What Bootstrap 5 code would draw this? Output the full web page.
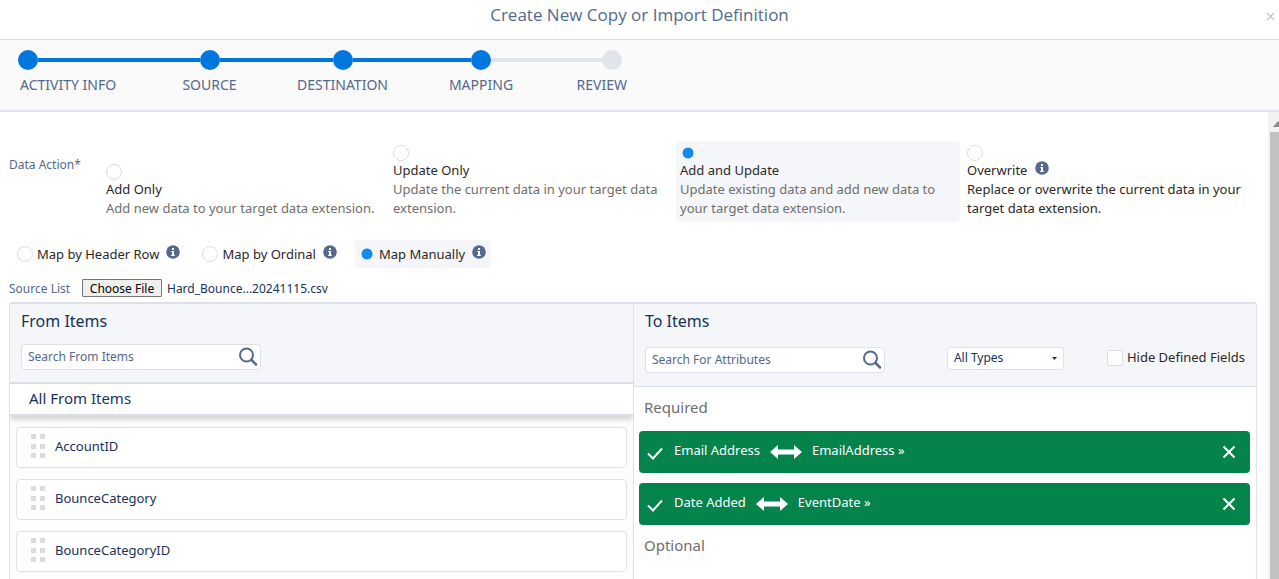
<!DOCTYPE html>
<html lang="en">
<head>
<meta charset="utf-8">
<meta name="viewport" content="width=device-width, initial-scale=1">
<title>Create New Copy or Import Definition</title>
<link href="https://cdn.jsdelivr.net/npm/bootstrap@5.3.0/dist/css/bootstrap.min.css" rel="stylesheet">
<style>
  :root { --line: #dde2ea; --slate: #54698d; --navy: #16325c; --wash: #f4f6f9; --brand: #0176de; --ok: #04844b; }
  body { font-family: "Noto Sans", "Open Sans", sans-serif; font-size: 13px; line-height: 19px; color: #2b2826; background: #fff; }
  .dialog-head { height: 40px; border-bottom: 1px solid #d8dde8; padding-bottom: 9px; }
  .dialog-title { font-family: "Open Sans", "Noto Sans", sans-serif; font-size: 17px; line-height: 20px; font-weight: 400; color: var(--slate); }
  .dialog-close { right: 4px; top: 11px; color: #c4c4c4; line-height: 1; }
  .dialog-close svg { display: block; }

  .wizard { background: #fafafa; border-bottom: 2px solid #e0e5ec; height: 72px; padding: 10px 18px 0; color: var(--slate); }
  .steps { display: grid; grid-template-columns: 135px 113px 153px 124px 84px; }
  .step-item { font-size: 14px; text-align: center; }
  .step-item a { color: inherit; padding-top: 5px; }
  .step-item:first-child a { text-align: left; padding-left: 2px; }
  .step-item:last-child a { text-align: right; }
  .track { height: 20px; }
  .track i { flex: 1 1 0; height: 4px; background: var(--brand); }
  .track b { flex: none; width: 20px; height: 20px; border-radius: 50%; background: var(--brand); }
  .track .todo { background: #e0e5ec; }
  .step-item:last-child .track { padding-right: 5px; }

  .work { padding: 29px 11px 0 9px; }
  .action-grid { display: grid; grid-template-columns: 90px repeat(4, minmax(0, 1fr)); column-gap: 3px; align-items: end; padding-right: 10px; }
  .field-name { font-size: 12px; color: var(--slate); }
  .action-grid .field-name { align-self: start; padding-top: 14px; }
  .choice { padding: 4px; border-radius: 4px; }
  .choice.picked, .map-choice.picked { background: var(--wash); }
  .muted-copy { color: #706e6b; }
  .pick { appearance: none; flex: none; display: block; width: 16px; height: 16px; margin: 0; border: 1px solid #d8dde6; border-radius: 50%; background: #fff; }
  .pick:checked { border-color: #eef0f4; background: radial-gradient(circle, #1589ee 5px, #fff 6px); }
  .pick[type=checkbox] { border-radius: 2px; }
  .info { display: block; flex: none; }
  .map-row { margin: 18px 0 0 4px; gap: 13px; }
  .map-choice { height: 28px; padding: 0 5px 0 4px; border-radius: 4px; gap: 4px; }
  .map-choice .info { margin: 0 0 4px 3px; }
  .source-row { height: 20px; margin: 10px 0 4px; font-size: 12px; }
  .source-row .field-name { width: 73px; }
  .file-btn { width: 80px; height: 18px; padding: 0; border: 1px solid #767676; border-radius: 1px; background: #efefef; color: #000; font-size: 12px; line-height: 15px; }
  .file-name { color: var(--navy); margin-left: 5px; }

  .panels { border: 1px solid var(--line); border-top-width: 2px; border-radius: 3px 3px 0 0; border-bottom: 0; }
  .pane { width: 50%; min-width: 0; overflow: hidden; }
  .pane + .pane { border-left: 1px solid var(--line); }
  .pane-head { background: var(--wash); border-bottom: 2px solid var(--line); padding: 7px 11px 0; height: 80px; }
  .pane + .pane .pane-head { border-bottom-width: 1px; height: 83px; }
  .pane h2 { font-size: 16px; line-height: 20px; font-weight: 400; color: var(--navy); margin: 0; }
  .find-box { width: 240px; height: 26px; margin-top: 13px; }
  .pane + .pane .find-box { margin-top: 16px; }
  .find-box input { width: 100%; height: 100%; border: 1px solid var(--line); border-radius: 4px; padding: 0 28px 2px 6px; font-size: 12px; color: var(--navy); background: #fff; }
  .find-box input::placeholder { color: var(--slate); opacity: 1; }
  .find-box svg { right: 3px; top: 3px; }
  .all-row { height: 32px; padding: 4px 19px 0; background: #fff; border-bottom: 2px solid #d8dde6; box-shadow: 0 3px 6px rgba(0,0,0,.2); z-index: 1; }
  .pane .all-row h2 { font-size: 15px; }
  .from-list { padding: 11px 6px 0; background: #fdfdfe; gap: 11px; }
  .from-item { height: 41px; border: 1px solid var(--line); border-radius: 4px; background: #fff; color: var(--navy); padding: 0 14px 3px; gap: 9px; }
  .type-select { width: 117px; height: 23px; margin: 16px 0 0; border: 1px solid var(--line); border-radius: 3px; padding: 0 6px 2px; font-size: 12px; line-height: 18px; color: var(--navy); appearance: none; background: #fff; }
  .select-wrap svg { right: 7px; bottom: 10px; pointer-events: none; }
  .hide-box { margin: 16px 0 0 43px; gap: 4px; height: 21px; white-space: nowrap; }
  .to-list { padding: 0 6px 0 5px; }
  .to-list h3 { font-size: 15px; line-height: 20px; font-weight: 400; color: #706e6b; margin: 0; padding: 10px 0 14px 5px; }
  .mapped { height: 42px; border-radius: 4px; background: var(--ok); color: #fff; padding: 0 14px 3px 8px; }
  .mapped + .mapped { margin-top: 10px; }
  .mapped a { color: #fff; }
  .mapped .tick { margin: 6px 11px 0 0; }
  .mapped .swap { margin: 3px 10px 0; }
  .mapped button { color: #fff; margin-top: 3px; }

  .rail { width: 11px; background: #f1f1f1; overflow: hidden; padding-left: 2px; }
  .rail svg { display: block; margin: 9px 0 5px 3px; }
  .rail span { width: 12px; flex: 1; background: #c1c1c1; }
</style>
</head>
<body>
<svg width="0" height="0" class="position-absolute" aria-hidden="true">
  <symbol id="i-info" viewBox="0 0 14 14"><circle cx="7" cy="7" r="6.8" fill="#54698d"/><path d="M6 3h2v2H6zM5.3 6H8v3.8h.8V11H5.2V9.800H6V7.100h-.7z" fill="#fff"/></symbol>
  <symbol id="i-find" viewBox="0 0 20 20"><circle cx="8.500" cy="8" r="6.500" fill="none" stroke="#54698d" stroke-width="2"/><path d="M13.500 13l4.500 4.500" stroke="#54698d" stroke-width="2.500" stroke-linecap="round"/></symbol>
  <symbol id="i-grip" viewBox="0 0 15 25"><path d="M0 0h5v5H0zM9 0h5v5H9zM0 10h5v5H0zM9 10h5v5H9zM0 19h5v5H0zM9 19h5v5H9z" fill="#dcdcdc"/></symbol>
  <symbol id="i-tick" viewBox="0 0 16 13"><path d="M1 6.500l5 5L15 1.500" fill="none" stroke="#fff" stroke-width="2"/></symbol>
  <symbol id="i-swap" viewBox="0 0 32 14"><path d="M0 7l8-7v4.500h16V0l8 7-8 7V9.500H8V14z" fill="#fff"/></symbol>
  <symbol id="i-x" viewBox="0 0 14 14"><path d="M1.500 1.500l11 11M12.500 1.500l-11 11" fill="none" stroke="currentColor" stroke-width="2"/></symbol>
</svg>

<div class="vh-100 d-flex flex-column overflow-hidden">
  <header class="dialog-head position-relative d-flex align-items-center justify-content-center flex-shrink-0">
    <h1 class="dialog-title m-0" id="title">Create New Copy or Import Definition</h1>
    <button type="button" class="dialog-close btn p-0 border-0 position-absolute" aria-label="Close"><svg width="9" height="11" viewBox="0 0 14 14"><use href="#i-x"/></svg></button>
  </header>

  <nav class="wizard flex-shrink-0" aria-label="Progress">
    <ol class="steps list-unstyled m-0">
      <li class="step-item"><div class="track d-flex align-items-center"><b></b><i></i></div><a href="#" class="d-block text-decoration-none">ACTIVITY INFO</a></li>
      <li class="step-item"><div class="track d-flex align-items-center"><i></i><b></b><i></i></div><a href="#" class="d-block text-decoration-none">SOURCE</a></li>
      <li class="step-item"><div class="track d-flex align-items-center"><i></i><b></b><i></i></div><a href="#" class="d-block text-decoration-none">DESTINATION</a></li>
      <li class="step-item"><div class="track d-flex align-items-center"><i></i><b></b><i class="todo"></i></div><a href="#" class="d-block text-decoration-none">MAPPING</a></li>
      <li class="step-item"><div class="track d-flex align-items-center"><i class="todo"></i><b class="todo"></b></div><a href="#" class="d-block text-decoration-none">REVIEW</a></li>
    </ol>
  </nav>

  <div class="d-flex flex-grow-1 overflow-hidden">
    <main class="work flex-grow-1 d-flex flex-column">
      <div class="action-grid">
        <div class="field-name">Data Action*</div>
        <div class="choice"><input class="pick" type="radio" name="action" id="a1"><label class="d-block" for="a1">Add Only</label><div class="muted-copy">Add new data to your target data extension.</div></div>
        <div class="choice"><input class="pick" type="radio" name="action" id="a2"><label class="d-block" for="a2">Update Only</label><div class="muted-copy">Update the current data in your target data extension.</div></div>
        <div class="choice picked"><input class="pick" type="radio" name="action" id="a3" checked><label class="d-block" for="a3">Add and Update</label><div class="muted-copy">Update existing data and add new data to your target data extension.</div></div>
        <div class="choice"><input class="pick" type="radio" name="action" id="a4"><div class="d-flex gap-2"><label for="a4">Overwrite</label><svg class="info" width="14" height="14"><use href="#i-info"/></svg></div><div>Replace or overwrite the current data in your target data extension.</div></div>
      </div>

      <div class="map-row d-flex">
        <div class="map-choice d-flex align-items-center"><input class="pick" type="radio" name="map" id="m1"><label for="m1">Map by Header Row</label><svg class="info" width="14" height="14"><use href="#i-info"/></svg></div>
        <div class="map-choice d-flex align-items-center"><input class="pick" type="radio" name="map" id="m2"><label for="m2">Map by Ordinal</label><svg class="info" width="14" height="14"><use href="#i-info"/></svg></div>
        <div class="map-choice picked d-flex align-items-center"><input class="pick" type="radio" name="map" id="m3" checked><label for="m3">Map Manually</label><svg class="info" width="14" height="14"><use href="#i-info"/></svg></div>
      </div>

      <div class="source-row d-flex align-items-center">
        <label class="field-name" for="file">Source List</label>
        <button type="button" class="file-btn" id="file">Choose File</button>
        <span class="file-name">Hard_Bounce...20241115.csv</span>
      </div>

      <div class="panels d-flex flex-grow-1">
        <section class="pane d-flex flex-column">
          <div class="pane-head">
            <h2>From Items</h2>
            <div class="find-box position-relative"><input type="text" placeholder="Search From Items" aria-label="Search From Items"><svg class="position-absolute" width="20" height="20"><use href="#i-find"/></svg></div>
          </div>
          <div class="all-row position-relative"><h2>All From Items</h2></div>
          <div class="from-list d-flex flex-column flex-grow-1">
            <div class="from-item d-flex align-items-center"><svg width="15" height="25"><use href="#i-grip"/></svg>AccountID</div>
            <div class="from-item d-flex align-items-center"><svg width="15" height="25"><use href="#i-grip"/></svg>BounceCategory</div>
            <div class="from-item d-flex align-items-center"><svg width="15" height="25"><use href="#i-grip"/></svg>BounceCategoryID</div>
          </div>
        </section>

        <section class="pane">
          <div class="pane-head">
            <h2>To Items</h2>
            <div class="d-flex justify-content-between">
              <div class="find-box position-relative"><input type="text" placeholder="Search For Attributes" aria-label="Search For Attributes"><svg class="position-absolute" width="20" height="20"><use href="#i-find"/></svg></div>
              <div class="d-flex align-items-start">
                <div class="select-wrap position-relative"><select class="type-select" aria-label="Type"><option>All Types</option></select><svg class="position-absolute" width="5" height="3" viewBox="0 0 5 3"><path d="M0 0h5L2.500 3z" fill="#16325c"/></svg></div>
                <div class="hide-box d-flex align-items-center"><input class="pick" type="checkbox" id="hide"><label for="hide">Hide Defined Fields</label></div>
              </div>
            </div>
          </div>
          <div class="to-list">
            <h3>Required</h3>
            <div class="mapped d-flex align-items-center"><svg class="tick" width="16" height="13"><use href="#i-tick"/></svg><span>Email Address</span><svg class="swap" width="32" height="14"><use href="#i-swap"/></svg><a href="#" class="text-decoration-none">EmailAddress »</a><button type="button" class="btn p-0 border-0 ms-auto d-flex" aria-label="Remove Email Address"><svg width="14" height="14"><use href="#i-x"/></svg></button></div>
            <div class="mapped d-flex align-items-center"><svg class="tick" width="16" height="13"><use href="#i-tick"/></svg><span>Date Added</span><svg class="swap" width="32" height="14"><use href="#i-swap"/></svg><a href="#" class="text-decoration-none">EventDate »</a><button type="button" class="btn p-0 border-0 ms-auto d-flex" aria-label="Remove Date Added"><svg width="14" height="14"><use href="#i-x"/></svg></button></div>
            <h3>Optional</h3>
          </div>
        </section>
      </div>
    </main>
    <div class="rail d-flex flex-column flex-shrink-0" aria-hidden="true"><svg width="10" height="6" viewBox="0 0 10 6"><path d="M0 6L5 0l5 6z" fill="#8a8a8a"/></svg><span></span></div>
  </div>
</div>
<script src="https://cdn.jsdelivr.net/npm/bootstrap@5.3.0/dist/js/bootstrap.bundle.min.js"></script>
</body>
</html>
